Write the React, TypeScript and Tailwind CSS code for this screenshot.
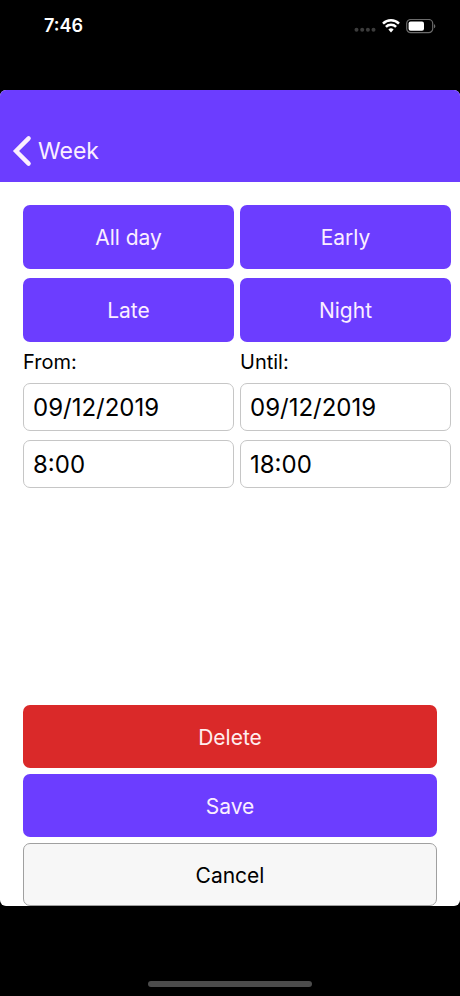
import { useState } from "react";

const presets = [
  { label: "All day", from: "0:00", until: "23:59" },
  { label: "Early", from: "6:00", until: "14:00" },
  { label: "Late", from: "14:00", until: "22:00" },
  { label: "Night", from: "22:00", until: "6:00" },
];

function StatusBar() {
  return (
    <div className="flex h-[90px] items-start justify-between pt-[14px] pr-6 pl-11 text-white">
      <span className="text-[18px] leading-6 font-semibold">7:46</span>
      <div className="flex h-6 items-center gap-[6px]">
        <svg width="22" height="16" viewBox="0 0 22 16" fill="#3c3c3c" aria-hidden="true">
          <circle cx="2.5" cy="11.8" r="2" />
          <circle cx="8.2" cy="11.8" r="2" />
          <circle cx="13.9" cy="11.8" r="2" />
          <circle cx="19.5" cy="11.8" r="2" />
        </svg>
        <svg width="18" height="14" viewBox="0 0 18 14" fill="none" stroke="#fff" strokeWidth="2.5" aria-hidden="true">
          <path d="M1 4.6a11.4 11.4 0 0 1 16 0" />
          <path d="M3.9 7.9a7.2 7.2 0 0 1 10.2 0" />
          <path d="M9 13.4 6.4 10.6a3.7 3.7 0 0 1 5.2 0Z" fill="#fff" stroke="none" />
        </svg>
        <svg width="30" height="15" viewBox="0 0 30 15" aria-hidden="true">
          <rect x="0.7" y="0.5" width="26" height="13.2" rx="4" fill="none" stroke="#6b6b6b" strokeWidth="1.2" />
          <rect x="2.6" y="2.4" width="15.4" height="9.4" rx="2" fill="#fff" />
          <path d="M28 4.9c1.8.8 1.8 3.6 0 4.4Z" fill="#6b6b6b" />
        </svg>
      </div>
    </div>
  );
}

function Field({ id, label, value, onChange }: { id: string; label: string; value: string; onChange: (v: string) => void }) {
  return (
    <input
      id={id}
      aria-label={label}
      type="text"
      value={value}
      onChange={(e) => onChange(e.target.value)}
      className="h-12 w-full min-w-0 rounded-[7px] border border-[#c6c6c6] bg-white px-[9px] text-2xl leading-8 text-black"
    />
  );
}

export default function App() {
  const [fromDate, setFromDate] = useState("09/12/2019");
  const [untilDate, setUntilDate] = useState("09/12/2019");
  const [fromTime, setFromTime] = useState("8:00");
  const [untilTime, setUntilTime] = useState("18:00");

  return (
    <div className="flex min-h-screen flex-col bg-black font-['Inter','Liberation_Sans',sans-serif]">
      <StatusBar />
      <div className="flex grow flex-col overflow-hidden rounded-md bg-white">
        <header className="flex h-[92px] items-end bg-[#6c3dff] px-3 pb-[15px]">
          <button type="button" className="flex items-center gap-[6px] text-[23px] leading-8 text-[#fbeeff]">
            <svg width="20" height="32" viewBox="0 0 20 32" fill="none" stroke="currentColor" strokeWidth="4.4" strokeLinecap="round" strokeLinejoin="miter" aria-hidden="true">
              <path d="M16.6 3.4 4 16 16.6 28.6" />
            </svg>
            Week
          </button>
        </header>
        <main className="flex grow flex-col pt-[23px] pl-[23px]">
          <div className="grid grid-cols-2 gap-x-[6px] gap-y-[9px] pr-[9px]">
            {presets.map((p) => (
              <button
                key={p.label}
                type="button"
                onClick={() => {
                  setFromTime(p.from);
                  setUntilTime(p.until);
                }}
                className="h-16 rounded-[7px] bg-[#6c3dff] pt-0.5 text-[21px] leading-8 text-[#fbeeff]"
              >
                {p.label}
              </button>
            ))}
          </div>
          <div className="grid grid-cols-2 gap-x-[6px] gap-y-[9px] pt-2 pr-[9px] text-black">
            <label htmlFor="from-date" className="text-xl leading-6">From:</label>
            <label htmlFor="until-date" className="text-xl leading-6">Until:</label>
            <Field id="from-date" label="From date" value={fromDate} onChange={setFromDate} />
            <Field id="until-date" label="Until date" value={untilDate} onChange={setUntilDate} />
            <Field id="from-time" label="From time" value={fromTime} onChange={setFromTime} />
            <Field id="until-time" label="Until time" value={untilTime} onChange={setUntilTime} />
          </div>
          <div className="mt-auto flex flex-col gap-[6px] pr-[23px] text-[21px] leading-8">
            <button type="button" className="h-[63px] rounded-[7px] bg-[#da2929] pt-0.5 text-[#ffeeee]">Delete</button>
            <button type="button" className="h-[63px] rounded-[7px] bg-[#6c3dff] pt-0.5 text-[#fbeeff]">Save</button>
            <button type="button" className="h-[63px] rounded-[7px] border border-[#a0a0a0] bg-[#f7f7f7] pt-0.5 text-black">Cancel</button>
          </div>
        </main>
      </div>
      <div className="flex h-[90px] items-end justify-center pb-[9px]">
        <div className="h-[6px] w-[164px] rounded-full bg-[#4c4c4c]" />
      </div>
    </div>
  );
}
